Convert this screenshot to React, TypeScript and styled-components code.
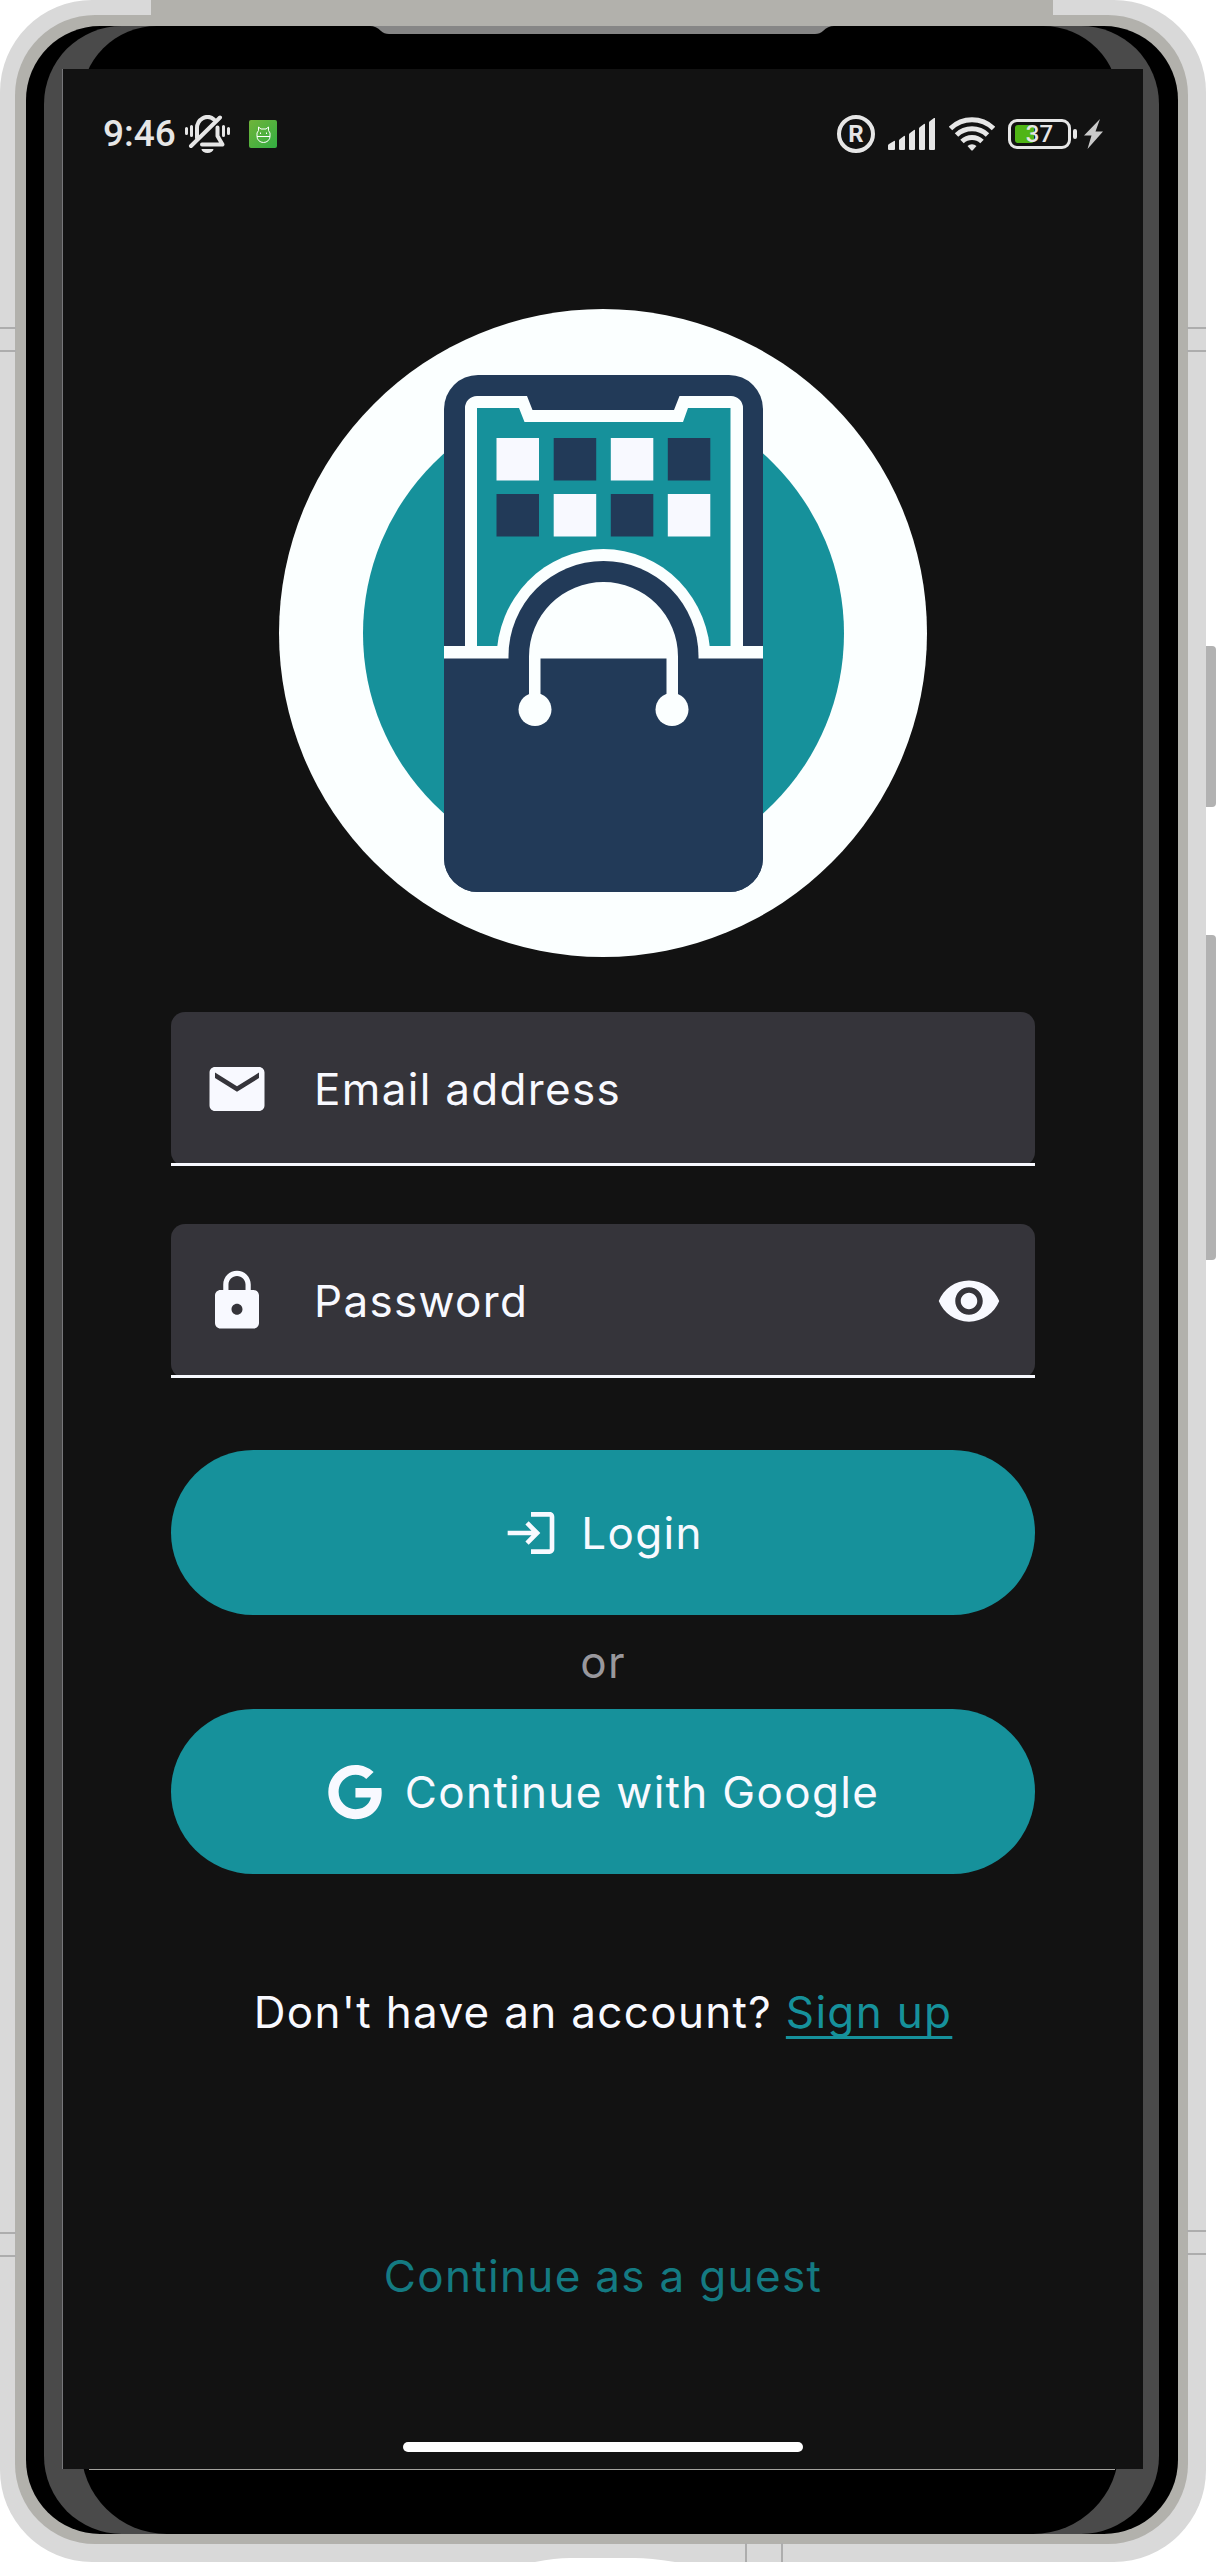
import React, { useState } from "react";
import styled, { createGlobalStyle } from "styled-components";
import { MdEmail, MdLock, MdLogin, MdVisibility, MdVisibilityOff } from "react-icons/md";
import { FaGoogle } from "react-icons/fa";

const color = {
  teal: "#16919b",
  tealDim: "#147a82",
  navy: "#223a58",
  paper: "#fbffff",
  text: "#f8f9ff",
  muted: "#99989d",
  surface: "#121212",
  field: "#35343a",
  status: "#e6e6e6",
};

const tracking = "0.03em";

const GlobalStyle = createGlobalStyle`
  * { box-sizing: border-box; }
  body { margin: 0; background: #ffffff; }
`;

/* ---------- device ---------- */

const Page = styled.div`
  padding-right: 10px;
  font-family: Inter, "Liberation Sans", sans-serif;
`;

const Shell = styled.div`
  position: relative;
  padding: 15px 18px 18px 15px;
  background: #d9d9d9;
  border-radius: 92px;
`;

const Rim = styled.div`
  padding: 11px 10px 10px 11px;
  background: #b2b1ac;
  border-radius: 80px;
`;

const Bezel = styled.div`
  padding: 0 19px 0 18px;
  background: #000000;
  border-radius: 74px;
`;

const Glass = styled.div`
  position: relative;
  padding: 43px 16px 65px 18px;
  background: #4a4a4a;
  border-radius: 78px;

  &::before {
    content: "";
    position: absolute;
    inset: 0 40px 0 37px;
    background: #000000;
    border-radius: 76px 76px 86px 86px;
  }
`;

const GlassLine = styled.div`
  position: relative;
  border-left: 1px solid #77777a;

  &::after {
    content: "";
    position: absolute;
    top: 100%;
    left: 26px;
    right: 28px;
    height: 1px;
    background: #a3a29e;
  }
`;

const TopBand = styled.div`
  position: absolute;
  top: 0;
  left: 151px;
  right: 153px;
  height: 26px;
  background: #b2b1ac;
`;

const Speaker = styled.svg`
  position: absolute;
  top: 26px;
  left: 370px;
  width: calc(100% - 742px);
  height: 8px;
`;

const SideKey = styled.div<{ $top: number; $height: number }>`
  position: absolute;
  left: 100%;
  top: ${(p) => p.$top}px;
  width: 10px;
  height: ${(p) => p.$height}px;
  background: #b2b2b2;
  border-radius: 0 4px 4px 0;
`;

const Antenna = styled.div<{ $side: "left" | "right"; $top: number }>`
  position: absolute;
  ${(p) => p.$side}: 0;
  top: ${(p) => p.$top}px;
  width: ${(p) => (p.$side === "left" ? 16 : 19)}px;
  height: 25px;
  border: solid #adadad;
  border-width: 2px 0;
`;

const BottomAntenna = styled.div`
  position: absolute;
  bottom: 0;
  left: 745px;
  width: 38px;
  height: 19px;
  border: solid #adadad;
  border-width: 0 2px;
`;

const Port = styled.svg`
  position: absolute;
  bottom: 0;
  left: 535px;
  width: 140px;
  height: 5px;
`;

/* ---------- screen ---------- */

const Screen = styled.main`
  position: relative;
  display: flex;
  flex-direction: column;
  align-items: center;
  padding: 46px 0 17px;
  background: ${color.surface};
`;

const StatusBar = styled.header`
  display: flex;
  align-items: center;
  justify-content: space-between;
  width: 100%;
  height: 38px;
  padding: 0 40px;
  color: ${color.status};
`;

const StatusGroup = styled.div<{ $gap: number }>`
  display: flex;
  align-items: center;
  gap: ${(p) => p.$gap}px;
`;

const Clock = styled.time`
  font: 500 37px/38px Roboto, sans-serif;
`;

const AppBadge = styled.svg`
  margin-left: 10px;
`;

const Registered = styled.span`
  display: flex;
  align-items: center;
  justify-content: center;
  width: 38px;
  height: 38px;
  border: 4px solid ${color.status};
  border-radius: 50%;
  font: 700 24px/30px Roboto, sans-serif;
`;

const Battery = styled.div`
  position: relative;
  display: flex;
  align-items: center;
  justify-content: center;
  width: 63px;
  height: 30px;
  border: 3px solid ${color.status};
  border-radius: 9px;
  font: 500 24px/24px Roboto, sans-serif;

  &::before {
    content: "";
    position: absolute;
    left: 4px;
    top: 3px;
    width: 19px;
    height: 18px;
    border-radius: 3px;
    background: #50b516;
  }

  &::after {
    content: "";
    position: absolute;
    left: 62px;
    top: 7px;
    width: 4px;
    height: 10px;
    border-radius: 2px;
    background: ${color.status};
  }
`;

const BatteryLevel = styled.span`
  position: relative;
`;

const Logo = styled.svg`
  display: block;
  width: 60%;
  height: auto;
  margin-top: 156px;
`;

const Form = styled.form`
  display: flex;
  flex-direction: column;
  align-items: center;
  width: 80%;
  margin-top: 55px;
`;

const Fields = styled.div`
  display: flex;
  flex-direction: column;
  gap: 58px;
  width: 100%;
  margin-bottom: 72px;
`;

const Field = styled.label`
  position: relative;
  display: flex;
  align-items: center;
  gap: 44px;
  height: 154px;
  padding: 0 33px;
  background: ${color.field};
  border-radius: 14px;
  color: ${color.text};
  font-size: 66px;

  &::after {
    content: "";
    position: absolute;
    left: 0;
    right: 0;
    bottom: 0;
    height: 3px;
    background: ${color.text};
  }

  svg {
    display: block;
    flex: none;
  }
`;

const Input = styled.input`
  flex: 1;
  min-width: 0;
  height: 66px;
  padding: 0;
  border: 0;
  outline: 0;
  background: transparent;
  color: ${color.text};
  font: 400 44px/66px Inter, sans-serif;
  letter-spacing: ${tracking};

  &::placeholder {
    color: ${color.text};
    opacity: 1;
  }
`;

const IconButton = styled.button`
  padding: 0;
  border: 0;
  background: none;
  color: inherit;
  font-size: 66px;
  cursor: pointer;
`;

const PillButton = styled.button`
  display: flex;
  align-items: center;
  justify-content: center;
  gap: 22px;
  width: 100%;
  height: 165px;
  border: 0;
  border-radius: 83px;
  background: ${color.teal};
  color: ${color.text};
  font: 400 44px/66px Inter, sans-serif;
  letter-spacing: ${tracking};
  cursor: pointer;

  svg {
    width: 56px;
    height: 56px;
  }
`;

const BodyText = styled.p`
  margin: 0;
  color: ${color.text};
  font-size: 44px;
  line-height: 66px;
  letter-spacing: ${tracking};
`;

const Divider = styled(BodyText)`
  margin: 14px 0;
  color: ${color.muted};
`;

const SignUpText = styled(BodyText)`
  margin-top: 105px;
`;

const SignUpLink = styled.a`
  color: ${color.teal};
  text-decoration: underline;
  text-decoration-thickness: 3px;
  text-underline-offset: 8px;
  text-decoration-skip-ink: none;
`;

const GuestLink = styled.a`
  margin-top: 198px;
  color: ${color.tealDim};
  font-size: 44px;
  line-height: 66px;
  letter-spacing: ${tracking};
  text-decoration: none;
`;

const HomeIndicator = styled.div`
  width: 37%;
  height: 10px;
  margin-top: 133px;
  border-radius: 5px;
  background: #ffffff;
`;

/* ---------- drawings ---------- */

const SilentBell = () => (
  <svg width="45" height="38" viewBox="0 0 45 38" fill="none" stroke={color.status} strokeLinecap="round" strokeLinejoin="round" aria-hidden="true">
    <path d="M12 23V14a10.500 11.500 0 0 1 17-9.500" strokeWidth="4" />
    <path d="M32.500 12.500V21l5 8.500H17" strokeWidth="4" />
    <path d="M35 2.500 6 31" strokeWidth="4" />
    <path d="M16.500 34h12a6 4 0 0 1-12 0z" fill={color.status} stroke="none" />
    <path d="M1.500 13.500v5M6.500 11.500v9M38.500 11.500v9M43.500 13.500v5" strokeWidth="3" />
  </svg>
);

const RobotBadge = () => (
  <AppBadge width="28" height="28" viewBox="0 0 28 28" aria-hidden="true">
    <defs>
      <linearGradient id="badge" x1="0" y1="0" x2="1" y2="1">
        <stop offset="0" stopColor="#70b43a" />
        <stop offset="1" stopColor="#32ad42" />
      </linearGradient>
    </defs>
    <rect width="28" height="28" rx="2" fill="url(#badge)" />
    <path d="M8 16.500V13l1.500-2.500V7l2.500 2h5l2.500-2v3.500L21 13v3.500a6.500 6 0 0 1-13 0zM8 16.500h13" fill="none" stroke="#ffffff" />
    <path d="M11.500 12.500v1.500M17.500 12.500v1.500" stroke="#ffffff" />
  </AppBadge>
);

const SignalBars = () => (
  <svg width="48" height="32" viewBox="0 0 48 32" fill={color.status} aria-hidden="true">
    <path d="M0 31v-3.500q0-1 1-1.500l5-3q1-.5 1 .5V31q0 1-1 1H1q-1 0-1-1z" />
    <path d="M11 31v-8.500q0-1 1-1.500l4-3q1-.5 1 .5V31q0 1-1 1h-4q-1 0-1-1z" />
    <path d="M21 31V16.500q0-1 1-1.500l4-3q1-.5 1 .5V31q0 1-1 1h-4q-1 0-1-1z" />
    <path d="M31 31V10.500q0-1 1-1.500l4-3q1-.5 1 .5V31q0 1-1 1h-4q-1 0-1-1z" />
    <path d="M41 31V4.500q0-1 1-1.500l4-3q1-.5 1 .5V31q0 1-1 1h-4q-1 0-1-1z" />
  </svg>
);

const WifiWaves = () => (
  <svg width="46" height="34" viewBox="0 0 46 34" fill="none" stroke={color.status} strokeWidth="5" aria-hidden="true">
    <path d="M1.500 11.500a31 31 0 0 1 43 0" />
    <path d="M7.500 18a22.500 22.500 0 0 1 31 0" />
    <path d="M13 24.500a14.500 14.500 0 0 1 20 0" />
    <path d="M18.500 29a6.500 6.500 0 0 1 9 0L24 33q-1 1-2 0z" fill={color.status} stroke="none" />
  </svg>
);

const ChargeBolt = () => (
  <svg width="19" height="30" viewBox="0 0 19 30" fill="#c9c9c9" aria-hidden="true">
    <path d="M16 0 0 16.500h7.500L3.500 30 19 12.500h-7.500z" />
  </svg>
);

const tileColumns = [217.5, 274.7, 331.8, 388.8];
const tileRows = [129, 185];

const ShopLogo = () => (
  <Logo viewBox="0 0 648 648" role="img" aria-label="Shop logo">
    <circle cx="324" cy="324" r="324" fill={color.paper} />
    <circle cx="324.500" cy="324.500" r="240.500" fill={color.teal} />
    <rect x="165" y="66" width="319" height="517" rx="34" fill={color.navy} />
    <path
      d="M186 350V99a12 12 0 0 1 12-12h50l5.500 14H395l5.500-14H452a12 12 0 0 1 12 12v251z"
      fill={color.paper}
    />
    <path d="M198 337V99h42l5.500 14H404l5-14h42.500v238z" fill={color.teal} />
    {tileRows.map((y, row) =>
      tileColumns.map((x, col) => (
        <rect key={`${x}-${y}`} x={x} y={y} width="42.500" height="42.500" fill={(row + col) % 2 ? color.navy : color.text} />
      ))
    )}
    <path d="M217.500 350a107 110 0 0 1 214 0z" fill={color.paper} />
    <rect x="165" y="337" width="319" height="13" fill={color.paper} />
    <path d="M165 349.500h319V549a34 34 0 0 1-34 34H199a34 34 0 0 1-34-34z" fill={color.navy} />
    <path d="M229.500 350v-3a95 95 0 0 1 190 0v3z" fill={color.navy} />
    <path d="M250 349.500v-2a74.500 74.500 0 0 1 149 0v42h-11.500v-40h-126v40H250z" fill={color.paper} />
    <circle cx="256" cy="400.500" r="16.500" fill={color.paper} />
    <circle cx="393" cy="400.500" r="16.500" fill={color.paper} />
  </Logo>
);

/* ---------- app ---------- */

export default function App() {
  const [visible, setVisible] = useState(false);

  return (
    <Page>
      <GlobalStyle />
      <Shell>
        <SideKey $top={646} $height={161} />
        <SideKey $top={935} $height={325} />
        <Antenna $side="left" $top={327} />
        <Antenna $side="right" $top={327} />
        <Antenna $side="left" $top={2232} />
        <Antenna $side="right" $top={2230} />
        <BottomAntenna />
        <Rim>
          <Bezel>
            <Glass>
              <GlassLine>
                <Screen>
                  <StatusBar>
                    <StatusGroup $gap={9}>
                      <Clock>9:46</Clock>
                      <SilentBell />
                      <RobotBadge />
                    </StatusGroup>
                    <StatusGroup $gap={13}>
                      <Registered>R</Registered>
                      <SignalBars />
                      <WifiWaves />
                      <Battery>
                        <BatteryLevel>37</BatteryLevel>
                      </Battery>
                      <ChargeBolt />
                    </StatusGroup>
                  </StatusBar>

                  <ShopLogo />

                  <Form onSubmit={(e) => e.preventDefault()}>
                    <Fields>
                      <Field>
                        <MdEmail aria-hidden="true" />
                        <Input type="email" name="email" placeholder="Email address" aria-label="Email address" />
                      </Field>
                      <Field>
                        <MdLock aria-hidden="true" />
                        <Input
                          type={visible ? "text" : "password"}
                          name="password"
                          placeholder="Password"
                          aria-label="Password"
                        />
                        <IconButton
                          type="button"
                          aria-label={visible ? "Hide password" : "Show password"}
                          onClick={() => setVisible(!visible)}
                        >
                          {visible ? <MdVisibilityOff /> : <MdVisibility />}
                        </IconButton>
                      </Field>
                    </Fields>
                    <PillButton type="submit">
                      <MdLogin aria-hidden="true" />
                      Login
                    </PillButton>
                    <Divider>or</Divider>
                    <PillButton type="button">
                      <FaGoogle aria-hidden="true" />
                      Continue with Google
                    </PillButton>
                  </Form>

                  <SignUpText>
                    Don't have an account? <SignUpLink href="#signup">Sign up</SignUpLink>
                  </SignUpText>
                  <GuestLink href="#guest">Continue as a guest</GuestLink>
                  <HomeIndicator />
                </Screen>
              </GlassLine>
            </Glass>
          </Bezel>
        </Rim>
        <TopBand />
        <Speaker viewBox="0 0 464 8" preserveAspectRatio="none" aria-hidden="true">
          <path d="M0 0Q6 0 11 5 14 8 19 8H445Q450 8 453 5 458 0 464 0z" fill="#868686" />
        </Speaker>
        <Port viewBox="0 0 140 5" preserveAspectRatio="none" aria-hidden="true">
          <path d="M0 5Q20 1 35 1H100Q115 1 140 5z" fill="#ffffff" />
        </Port>
      </Shell>
    </Page>
  );
}
